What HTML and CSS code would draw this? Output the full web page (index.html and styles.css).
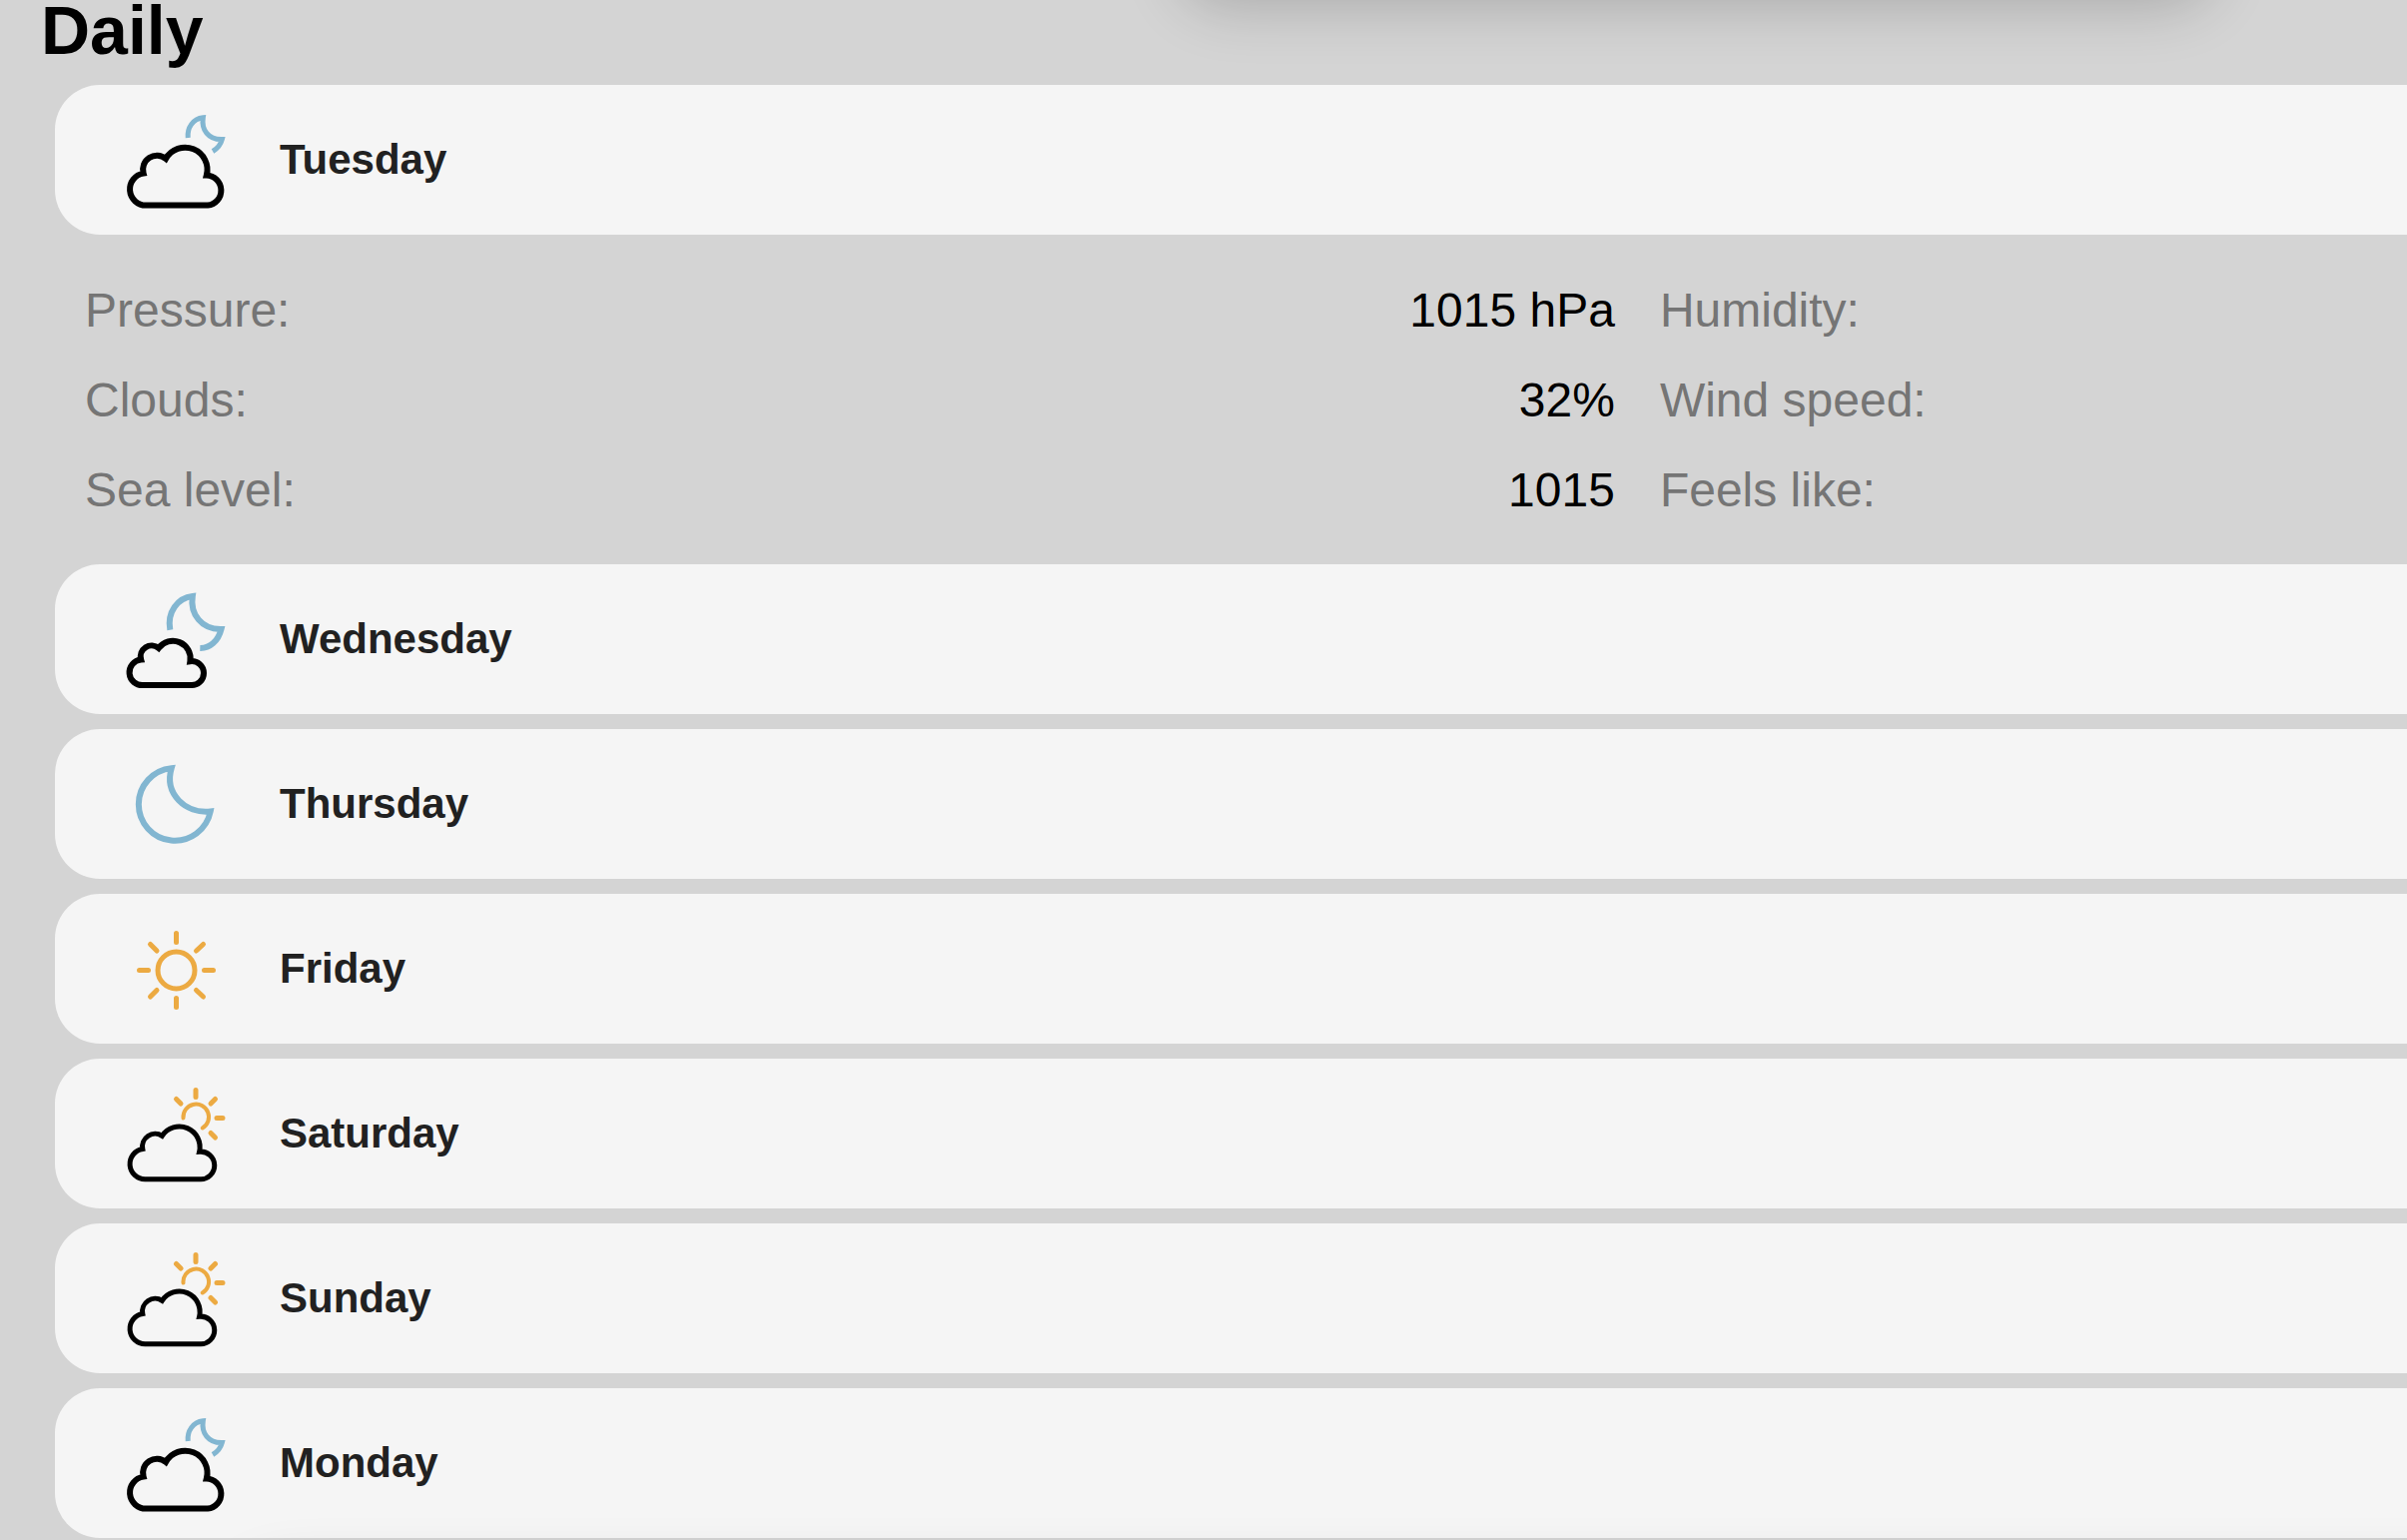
FILE: index.html
```html
<!DOCTYPE html>
<html lang="en">
<head>
<meta charset="utf-8">
<title>Daily forecast</title>
<link rel="stylesheet" href="styles.css">
</head>
<body>
<svg class="sprite" aria-hidden="true">
  <symbol id="cloud-night" viewBox="0 0 130 120">
    <path class="cloud" d="M36.300 105.600A16.100 16.100 0 0 1 33.600 73.600A14 14 0 0 1 56 59A22.200 22.200 0 0 1 96.800 75.600A15.050 15.050 0 0 1 98 105.600Z"/>
    <path class="moon thin" d="M78.200 38C77.200 28 83 19 93.300 17.800C91.500 30 98.500 40 112.300 39.600C111 44.500 108 48.500 103 51.500"/>
  </symbol>
  <symbol id="cloud-moon" viewBox="0 0 130 120">
    <path class="cloud" d="M33.500 106A12.800 12.800 0 0 1 31.200 80.500A11 11 0 0 1 48.800 69A17.600 17.600 0 0 1 80.400 82.200A12 12 0 1 1 80.500 106Z"/>
    <path class="moon" d="M60.300 50.700C57 33 68 18.500 82.800 17C80 35 92 50.500 111.500 50C108.500 62 100 69.300 90.300 69"/>
  </symbol>
  <symbol id="moon" viewBox="0 0 130 120">
    <path class="moon" d="M61.700 24.200A36.300 36.300 0 1 0 100.700 67.500C76 70 54 50 61.700 24.200Z"/>
  </symbol>
  <symbol id="sun" viewBox="0 0 130 120">
    <circle class="sun" cx="66.500" cy="61.500" r="18.500"/>
    <path class="sun" d="M66.500 24.500V33.500M66.500 89.500V98.500M29.500 61.500H38.500M94.500 61.500H103.500M40.500 35.500L47 42M86.500 42L93.500 35.500M40.500 88L47 81.500M86.500 81.500L93.500 88"/>
  </symbol>
  <symbol id="cloud-sun" viewBox="0 0 130 120">
    <path class="cloud light" d="M35.200 105.700A15.200 15.200 0 0 1 32.800 75.500A12.800 12.800 0 0 1 52.300 62.300A20.600 20.600 0 0 1 89.600 78.200A13.800 13.800 0 1 1 90 105.700Z"/>
    <path class="sun ring" d="M73.500 44.500A12.800 12.800 0 1 1 92.700 54.500"/>
    <path class="sun" d="M86 16.500V23.500M107 44.500H113M66.500 25.500L71 30M101 30L105.500 25.500M101 59.500L105.500 64"/>
  </symbol>
</svg>

<div class="panel-shadow above"></div>
<main class="forecast">
  <h2 class="title">Daily</h2>
  <section class="day">
    <button class="day-header" type="button" aria-expanded="true" aria-controls="details"><svg class="icon" aria-hidden="true"><use href="#cloud-night"/></svg><span>Tuesday</span></button>
    <dl class="details" id="details">
      <div class="item"><dt>Pressure:</dt><dd>1015 hPa</dd></div>
      <div class="item"><dt>Humidity:</dt></div>
      <div class="item"><dt>Clouds:</dt><dd>32%</dd></div>
      <div class="item"><dt>Wind speed:</dt></div>
      <div class="item"><dt>Sea level:</dt><dd>1015</dd></div>
      <div class="item"><dt>Feels like:</dt></div>
    </dl>
  </section>
  <section class="day"><button class="day-header" type="button" aria-expanded="false"><svg class="icon" aria-hidden="true"><use href="#cloud-moon"/></svg><span>Wednesday</span></button></section>
  <section class="day"><button class="day-header" type="button" aria-expanded="false"><svg class="icon" aria-hidden="true"><use href="#moon"/></svg><span>Thursday</span></button></section>
  <section class="day"><button class="day-header" type="button" aria-expanded="false"><svg class="icon" aria-hidden="true"><use href="#sun"/></svg><span>Friday</span></button></section>
  <section class="day"><button class="day-header" type="button" aria-expanded="false"><svg class="icon" aria-hidden="true"><use href="#cloud-sun"/></svg><span>Saturday</span></button></section>
  <section class="day"><button class="day-header" type="button" aria-expanded="false"><svg class="icon" aria-hidden="true"><use href="#cloud-sun"/></svg><span>Sunday</span></button></section>
  <section class="day"><button class="day-header" type="button" aria-expanded="false"><svg class="icon" aria-hidden="true"><use href="#cloud-night"/></svg><span>Monday</span></button></section>
</main>
<div class="panel-shadow below"></div>
</body>
</html>
```
FILE: styles.css
```css
* {
  box-sizing: border-box;
}

body {
  margin: 0;
  overflow: hidden;
  background: #d4d4d4;
  color: #000;
  font-family: "Liberation Sans", Arial, sans-serif;
}

.sprite {
  display: none;
}

.forecast {
  padding-left: 40px;
}

.title {
  margin: 0;
  padding: 0 0 25px 1px;
  font-size: 68px;
  line-height: 60px;
}

.day {
  margin: 0 0 15px 15px;
}

.day-header {
  display: flex;
  align-items: center;
  gap: 40px;
  width: 100%;
  height: 150px;
  padding: 0 55px;
  border: 0;
  border-radius: 45px 0 0 45px;
  background: #f5f5f5;
  color: #212121;
  font-family: inherit;
  font-size: 42px;
  font-weight: 700;
  text-align: left;
}

.icon {
  flex: none;
  width: 130px;
  height: 120px;
}

.details {
  display: grid;
  grid-template-columns: 43fr 21fr;
  column-gap: 45px;
  margin: 0;
  padding: 31px 0 14px 30px;
  font-size: 48px;
  line-height: 90px;
}

.item {
  display: flex;
  justify-content: space-between;
}

.item dt {
  color: #757575;
}

.item dd {
  margin: 0;
}

/* Shadows cast by the panels scrolled out above and below the forecast */
.panel-shadow {
  position: fixed;
  height: 150px;
  border-radius: 45px;
  box-shadow: 0 6px 60px rgba(0, 0, 0, 0.2);
  pointer-events: none;
}

.above {
  bottom: 100%;
  left: 49%;
  right: 8%;
}

.below {
  top: calc(100% + 30px);
  left: 10%;
  right: -10%;
}

.cloud,
.moon,
.sun {
  fill: none;
}

.cloud {
  stroke: #000;
  stroke-width: 6px;
}

.light {
  stroke-width: 5px;
}

.moon {
  stroke: #82b6d1;
  stroke-width: 6px;
}

.thin {
  stroke-width: 5px;
}

.sun {
  stroke: #ecaa42;
  stroke-width: 5px;
  stroke-linecap: round;
}

.ring {
  stroke-width: 4px;
}
```
